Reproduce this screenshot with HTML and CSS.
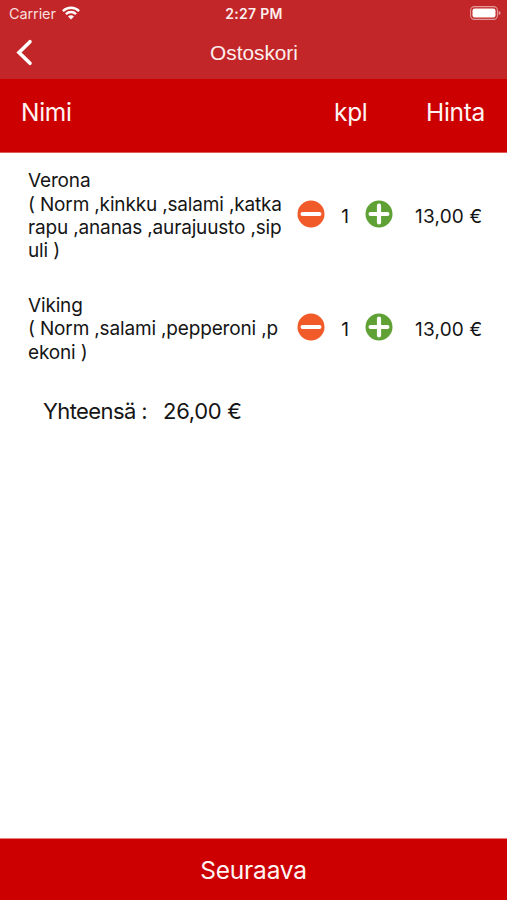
FILE: index.html
```html
<!DOCTYPE html>
<html lang="fi">
<head>
<meta charset="utf-8">
<meta name="viewport" content="width=device-width, initial-scale=1">
<title>Ostoskori</title>
<link rel="stylesheet" href="styles.css">
</head>
<body>
<div class="app">
  <header class="top">
    <div class="status">
      <div class="status-left">
        <span class="carrier">Carrier</span>
        <svg class="wifi" width="18" height="14" viewBox="0 0 18 14" fill="none" stroke="#fff" stroke-width="2.3"><path d="M.9 5.1a11.5 11.5 0 0 1 16.2 0M3.9 8.1a7.2 7.2 0 0 1 10.2 0"/><path d="M9 13.5 6 10.5a4.2 4.2 0 0 1 6 0z" fill="#fff" stroke="none"/></svg>
      </div>
      <span class="clock">2:27 PM</span>
      <svg class="battery" width="31" height="14" viewBox="0 0 31 14"><rect x=".6" y=".6" width="26.8" height="12.8" rx="3.8" fill="none" stroke="#e39a9b" stroke-width="1.1"/><rect x="2.5" y="2.5" width="23" height="9" rx="2" fill="#fff"/><path d="M28.6 4.8q2 .8 2 2.2t-2 2.2z" fill="#e39a9b"/></svg>
    </div>
    <nav class="nav">
      <svg class="back" width="17" height="27" viewBox="0 0 17 27" fill="none" stroke="#fff" stroke-width="3.6" stroke-linecap="round" stroke-linejoin="miter"><path d="M14 2.7 3 13.5 14 24.3"/></svg>
      <h1 class="title">Ostoskori</h1>
      <span></span>
    </nav>
  </header>
  <div class="columns">
    <span>Nimi</span>
    <span>kpl</span>
    <span>Hinta</span>
  </div>
  <main class="cart">
    <section class="item first">
      <p class="name">Verona<br>( Norm ,kinkku ,salami ,katka<br>rapu ,ananas ,aurajuusto ,sip<br>uli )</p>
      <svg class="btn" width="28" height="28" viewBox="0 0 28 28"><circle cx="14" cy="14" r="13.5" fill="#f15a29"/><path d="M5.6 14h16.8" stroke="#fff" stroke-width="4.2" stroke-linecap="round"/></svg>
      <span class="qty">1</span>
      <svg class="btn" width="28" height="28" viewBox="0 0 28 28"><circle cx="14" cy="14" r="13.5" fill="#5fa134"/><path d="M5.6 14h16.8M14 5.6v16.8" stroke="#fff" stroke-width="4.2" stroke-linecap="round"/></svg>
      <span class="price">13,00 €</span>
    </section>
    <section class="item second">
      <p class="name">Viking<br>( Norm ,salami ,pepperoni ,p<br>ekoni )</p>
      <svg class="btn" width="28" height="28" viewBox="0 0 28 28"><circle cx="14" cy="14" r="13.5" fill="#f15a29"/><path d="M5.6 14h16.8" stroke="#fff" stroke-width="4.2" stroke-linecap="round"/></svg>
      <span class="qty">1</span>
      <svg class="btn" width="28" height="28" viewBox="0 0 28 28"><circle cx="14" cy="14" r="13.5" fill="#5fa134"/><path d="M5.6 14h16.8M14 5.6v16.8" stroke="#fff" stroke-width="4.2" stroke-linecap="round"/></svg>
      <span class="price">13,00 €</span>
    </section>
    <div class="total"><span class="total-label">Yhteensä :</span><span class="total-sum">26,00 €</span></div>
  </main>
  <footer class="next">Seuraava</footer>
</div>
</body>
</html>
```
FILE: styles.css
```css
* { box-sizing: border-box; }
body {
  margin: 0;
  background: #fff;
  color: #151515;
  font-family: Inter, "Liberation Sans", sans-serif;
}
.app { display: flex; flex-direction: column; height: 900px; }
.top { height: 79px; background: #c22628; color: #fff; }
.status {
  display: grid;
  grid-template-columns: 1fr auto 1fr;
  align-items: center;
  height: 26px;
  padding: 1px 6px 0 9px;
}
.status-left { display: flex; align-items: center; gap: 6px; }
.carrier { font-size: 14.5px; letter-spacing: -0.1px; color: #f8dede; }
.wifi { margin-bottom: 2px; }
.clock { font-size: 14px; font-weight: 600; letter-spacing: 0.3px; margin-right: 2px; color: #fdeeee; }
.battery { justify-self: end; margin-bottom: 1px; }
.nav {
  display: grid;
  grid-template-columns: 1fr auto 1fr;
  align-items: center;
  height: 53px;
  padding: 0 15px 0 16px;
}
.title {
  margin: 0;
  font: 400 20.8px/24px "Liberation Sans", sans-serif;
  color: #fdeeee;
}
.columns {
  display: grid;
  grid-template-columns: 313px 92px 1fr;
  align-items: center;
  height: 74px;
  padding: 0 0 7px 21px;
  border-bottom: 1px solid #e05a5a;
  background: #c00;
  color: #fff4f4;
  font-size: 24.5px;
  letter-spacing: -0.3px;
}
.cart { flex: 1; font-size: 19px; }
.item {
  display: grid;
  grid-template-columns: 269px 28px 40px 28px 1fr;
  align-items: center;
  padding-left: 28px;
}
.first { height: 126px; }
.second { height: 100px; }
.btn { margin-bottom: 5px; }
.name { margin: 0; line-height: 23.3px; letter-spacing: -0.16px; white-space: nowrap; }
.qty { text-align: center; }
.price { padding-left: 22px; letter-spacing: 0.2px; white-space: nowrap; }
.total { display: flex; gap: 16px; padding: 18px 0 0 43px; font-size: 22px; line-height: 28px; }
.total-label { letter-spacing: -0.6px; }
.total-sum { letter-spacing: -0.3px; }
.next {
  height: 62px;
  border-top: 1px solid #e88080;
  background: #c00;
  color: #fff4f4;
  font-size: 24.5px;
  letter-spacing: -0.2px;
  line-height: 62px;
  text-align: center;
}
```
